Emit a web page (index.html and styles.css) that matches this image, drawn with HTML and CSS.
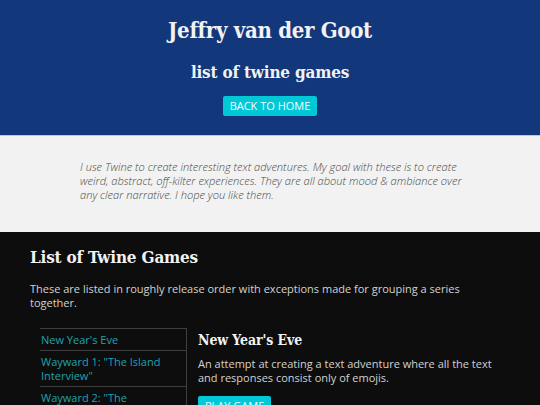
FILE: index.html
```html
<!DOCTYPE html>
<html>
<head>
<meta charset="utf-8">
<title>list of twine games</title>
<link rel="stylesheet" href="styles.css">
</head>
<body>
<header class="hero">
  <h1 class="hero-title">Jeffry van der Goot</h1>
  <h2 class="hero-sub">list of twine games</h2>
  <a class="btn" href="#">Back to Home</a>
</header>
<section class="intro">
  <p class="intro-text">I use Twine to create interesting text adventures. My goal with these is to create weird, abstract, off-kilter experiences. They are all about mood &amp; ambiance over any clear narrative. I hope you like them.</p>
</section>
<main class="games">
  <h2 class="games-title">List of Twine Games</h2>
  <p class="games-desc">These are listed in roughly release order with exceptions made for grouping a series together.</p>
  <div class="games-body">
    <ul class="game-nav">
      <li class="game-nav-item"><a href="#">New Year's Eve</a></li>
      <li class="game-nav-item"><a href="#">Wayward 1: "The Island Interview"</a></li>
      <li class="game-nav-item"><a href="#">Wayward 2: "The Lighthouse Keeper"</a></li>
      <li class="game-nav-item"><a href="#">Wayward 3</a></li>
    </ul>
    <div class="game-detail">
      <h3 class="game-title">New Year's Eve</h3>
      <p class="game-text">An attempt at creating a text adventure where all the text and responses consist only of emojis.</p>
      <a class="btn" href="#">Play Game</a>
    </div>
  </div>
</main>
</body>
</html>
```
FILE: styles.css
```css
html, body {
  margin: 0;
  padding: 0;
  background: #0d0d0d;
}
body {
  font-family: "Open Sans", "Liberation Sans", sans-serif;
}
.hero {
  background: #12377a;
  text-align: center;
  padding: 16px 0 19px;
  border-bottom: 1px solid #b8c9de;
}
.hero-title,
.hero-sub,
.games-title,
.game-title {
  font-family: "DejaVu Serif", serif;
  font-stretch: condensed;
  font-weight: 700;
  color: #f2f2f2;
}
.hero-title {
  margin: 0;
  font-size: 22px;
  line-height: 28px;
  letter-spacing: -0.3px;
}
.hero-sub {
  margin: 17px 0 10px;
  font-size: 17px;
  line-height: 22px;
  letter-spacing: -0.2px;
}
.btn {
  display: inline-block;
  background: #00c8d7;
  color: #f4ffff;
  font-family: "Open Sans", sans-serif;
  font-size: 11px;
  line-height: 14px;
  text-transform: uppercase;
  text-decoration: none;
  padding: 3px 7px;
  border-radius: 2px;
}
.intro {
  background: #f1f2f1;
  padding: 24px 0 30px 80px;
}
.intro-text {
  margin: 0;
  width: 390px;
  font-style: italic;
  font-weight: 300;
  font-size: 11.1px;
  line-height: 14px;
  color: #4a4a4a;
}
.games {
  padding: 14px 40px 0 30px;
}
.games-title {
  margin: 0;
  font-size: 17px;
  line-height: 22px;
  letter-spacing: -0.2px;
}
.games-desc {
  margin: 14px 0 18px;
  font-size: 11px;
  line-height: 14px;
  color: #d2d2d2;
}
.games-body {
  display: flex;
  padding-left: 10px;
}
.game-nav {
  list-style: none;
  margin: 0;
  padding: 0;
  width: 146px;
  flex: none;
  border-top: 1px solid #3e3e3e;
  border-right: 1px solid #3e3e3e;
}
.game-nav-item {
  padding: 4px 4px 3px 1px;
  border-bottom: 1px solid #3e3e3e;
  font-size: 11px;
  line-height: 14px;
}
.game-nav-item a {
  color: #1ea3ae;
  text-decoration: none;
}
.game-detail {
  flex: 1;
  padding-left: 11px;
}
.game-title {
  margin: 0;
  padding-top: 3px;
  font-size: 14px;
  line-height: 18px;
  letter-spacing: -0.1px;
}
.game-text {
  margin: 8px 0 9px;
  font-size: 11px;
  line-height: 13.5px;
  color: #d2d2d2;
}
```
